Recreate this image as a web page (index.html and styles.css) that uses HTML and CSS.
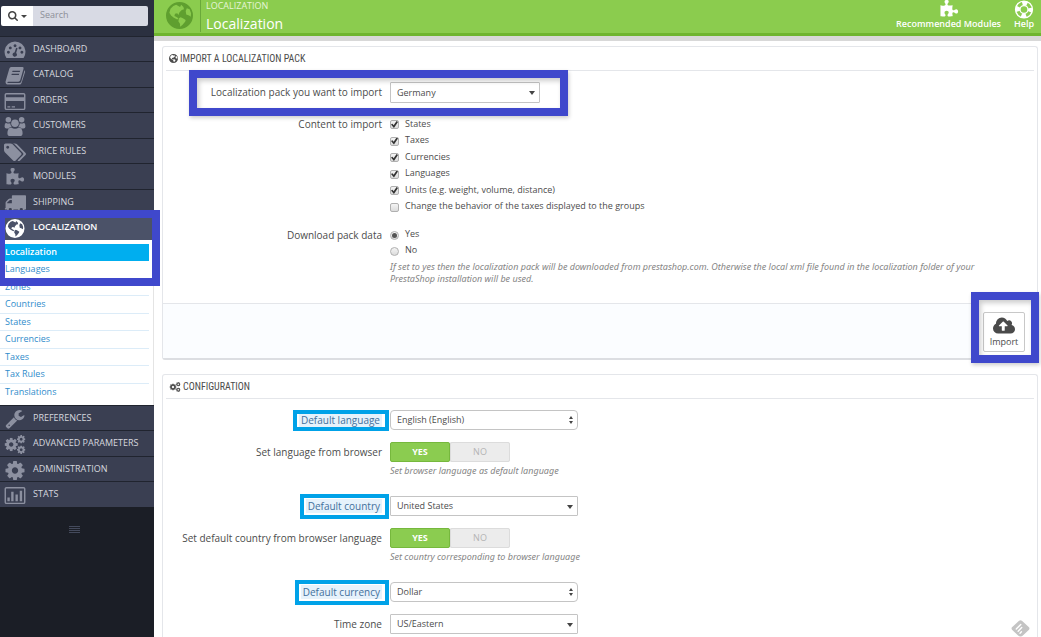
FILE: index.html
```html
<!DOCTYPE html>
<html lang="en">
<head>
<meta charset="utf-8">
<meta name="viewport" content="width=device-width, initial-scale=1">
<title>Localization</title>
<link rel="stylesheet" href="styles.css">
</head>
<body>
<svg class="sprite" aria-hidden="true">
  <symbol id="cog" viewBox="128 128 1536 1536"><path d="M1152 896q0-106-75-181t-181-75-181 75-75 181 75 181 181 75 181-75 75-181zm512-109v222q0 12-8 23t-20 13l-185 28q-19 54-39 91 35 50 107 138 10 12 10 25t-9 23q-27 37-99 108t-94 71q-12 0-26-9l-138-108q-44 23-91 38-16 136-29 186-7 28-36 28h-222q-14 0-24.5-8.5t-11.5-21.5l-28-184q-49-16-90-37l-141 107q-10 9-25 9-14 0-25-11-126-114-165-168-7-10-7-23 0-12 8-23 15-21 51-66.5t54-70.5q-27-50-41-99l-183-27q-13-2-21-12.5t-8-23.5v-222q0-12 8-23t19-13l186-28q14-46 39-92-40-57-107-138-10-12-10-24 0-10 9-23 26-36 98.5-107.5t94.5-71.5q13 0 26 10l138 107q44-23 91-38 16-136 29-186 7-28 36-28h222q14 0 24.5 8.5t11.5 21.5l28 184q49 16 90 37l142-107q9-9 24-9 13 0 25 10 129 119 165 170 7 8 7 22 0 12-8 23-15 21-51 66.5t-54 70.5q26 50 41 98l183 28q13 2 21 12.5t8 23.5z"/></symbol>
  <symbol id="cogs" viewBox="0 0 22 20"><use href="#cog" x="0" y="3" width="14" height="14"/><use href="#cog" x="13" y="0" width="9" height="9"/><use href="#cog" x="13" y="11" width="9" height="9"/></symbol>
  <symbol id="globe" viewBox="0 0 24 24"><path fill-rule="evenodd" d="M12 0a12 12 0 1 1 0 24a12 12 0 0 1 0-24zM6.500 3.500L4 6L3 9.500L4.500 12L7 14L10 15.500L11 14.500L9 13L7.500 12.500L8 10.500L10 10L11 11.500L12 9L14 7L16 6.500L15.500 4.500L13.500 2.500L12.500 4.500L11 3.500L9 2.500zM11.500 14.500L11 17L12.500 19.500L12.500 22L14.500 20.500L17 17.500L17.500 16L15 14.500L13 13.500zM18.500 5.500L17.500 8L18 11L20.500 12L22 13L22.300 10L21 6.500z"/></symbol>
  <symbol id="puzzle" viewBox="0 0 1792 1792"><path d="M1755 1083q0 81-44.500 135t-123.500 54q-41 0-77.500-17.500t-59-38-56.500-38-71-17.500q-110 0-110 124 0 39 16 115t15 115v5q-22 0-33 1-34 3-97.500 11.500t-115.500 13.500-98 5q-61 0-103-26.500t-42-83.500q0-37 17.500-71t38-56.500 38-59 17.500-77.500q0-79-54-123.500t-135-44.500q-84 0-143 45.500t-59 127.500q0 43 15 83t33.500 64.500 33.500 53 15 50.500q0 45-46 89-37 35-117 35-95 0-245-24-9-2-27.500-4t-27.500-4l-13-2q-1 0-3-1-2 0-2-1v-1024q2 1 17.500 3.500t34 5 21.500 3.500q150 24 245 24 80 0 117-35 46-44 46-89 0-22-15-50.500t-33.500-53-33.500-64.500-15-83q0-82 59-127.500t144-45.500q80 0 134 44.500t54 123.500q0 41-17.500 77.500t-38 59-38 56.500-17.500 71q0 57 42 83.500t103 26.500q64 0 180-15t163-17v2q-1 2-3.500 17.500t-5 34-3.500 21.500q-24 150-24 245 0 80 35 117 44 46 89 46 22 0 50.500-15t53-33.500 64.500-33.500 83-15q82 0 127.500 59t45.500 143z"/></symbol>
</svg>

<div class="app">
  <nav class="sidebar" aria-label="Main menu">
    <form class="search">
      <button class="search-scope" type="button" aria-label="Search in">
        <svg class="search-icon" viewBox="64 128 1664 1664"><path d="M1216 832q0-185-131.500-316.500t-316.500-131.500-316.500 131.500-131.500 316.500 131.500 316.500 316.500 131.500 316.500-131.500 131.500-316.500zm512 832q0 52-38 90t-90 38q-54 0-90-38l-343-342q-179 124-399 124-143 0-273.500-55.500t-225-150-150-225-55.500-273.500 55.500-273.500 150-225 225-150 273.500-55.500 273.500 55.500 225 150 150 225 55.500 273.500q0 220-124 399l343 343q37 37 37 90z"/></svg>
        <span class="caret"></span>
      </button>
      <input class="search-input" type="text" placeholder="Search" aria-label="Search">
    </form>

    <ul class="menu">
      <li><a class="menu-link" href="#"><svg class="menu-icon" viewBox="0 0 22 20"><path fill-rule="evenodd" d="M1.800 17.500A11 11 0 1 1 20.200 17.500Q19.900 18 19.300 18H2.700Q2.100 18 1.800 17.500zM4 10.300a1.500 1.500 0 1 0 .1 0zM6 5.800a1.500 1.500 0 1 0 .1 0zM11 3.500a1.500 1.500 0 1 0 .1 0zM16.200 5.800a1.500 1.500 0 1 0 .1 0zM18.200 10.300a1.500 1.500 0 1 0 .1 0zM12.200 7.200L10.500 12a2.300 2.300 0 1 0 1.700 .5L13.700 7.700z"/></svg>DASHBOARD</a></li>
      <li><a class="menu-link" href="#"><svg class="menu-icon" viewBox="0 0 22 20"><path fill-rule="evenodd" d="M7 1H19Q20.500 1.300 20 3L16.500 15Q16 16.500 14.500 16.500H4Q2.800 16.500 3 17.500Q3.300 18 4 18H15.500Q17 18 17.500 16.500L21 4.500Q22 5 21.500 6.500L18 17.500Q17.500 19.500 15.500 19.500H4Q1 19.500 1 16.500L5 3Q5.500 1 7 1zM8.500 5L8 6.200H16L16.500 5zM7.700 8.200L7.200 9.400H15L15.500 8.200z"/></svg>CATALOG</a></li>
      <li><a class="menu-link" href="#"><svg class="menu-icon" viewBox="0 0 22 20"><path fill-rule="evenodd" d="M2 1H20Q22 1 22 3V17Q22 19 20 19H2Q0 19 0 17V3Q0 1 2 1zM1.500 3V5.500H20.500V3Q20.500 2.500 20 2.500H2Q1.500 2.500 1.500 3zM1.500 9.500V17Q1.500 17.500 2 17.500H20Q20.500 17.500 20.500 17V9.500zM3 15H6V16.300H3zM7.500 15H11V16.300H7.500z"/></svg>ORDERS</a></li>
      <li><a class="menu-link" href="#"><svg class="menu-icon" viewBox="0 0 22 20"><circle cx="4" cy="3" r="2.900"/><circle cx="18" cy="3" r="2.900"/><circle cx="11" cy="6.500" r="4"/><path d="M1.500 6Q3.500 7.500 6 6.500Q6 9 7.500 10.500Q5 10.500 4.500 12H2Q0 12 0 10Q0 6.500 1.500 6zM20.500 6Q18.500 7.500 16 6.500Q16 9 14.500 10.500Q17 10.500 17.500 12H20Q22 12 22 10Q22 6.500 20.500 6zM7 11Q11 13.500 15 11Q19 11.500 19 17Q19 20 16 20H6Q3 20 3 17Q3 11.500 7 11z"/></svg>CUSTOMERS</a></li>
      <li><a class="menu-link" href="#"><svg class="menu-icon" viewBox="0 100 1900 1600"><path d="M448 448q0-53-37.500-90.500t-90.500-37.500-90.500 37.500-37.500 90.500 37.500 90.500 90.500 37.500 90.500-37.500 37.500-90.500zm1067 576q0 53-37 90l-491 492q-39 37-91 37-53 0-90-37l-715-716q-38-37-64.500-101t-26.500-117v-416q0-52 38-90t90-38h416q53 0 117 26.500t102 64.500l715 714q37 39 37 91zm384 0q0 53-37 90l-491 492q-39 37-91 37-36 0-59-14t-53-45l470-470q37-37 37-90 0-52-37-91l-715-714q-38-38-102-64.500t-117-26.500h224q53 0 117 26.500t102 64.500l715 714q37 39 37 91z"/></svg>PRICE RULES</a></li>
      <li><a class="menu-link" href="#"><svg class="menu-icon"><use href="#puzzle"/></svg>MODULES</a></li>
      <li><a class="menu-link" href="#"><svg class="menu-icon" viewBox="0 150 1792 1542"><path d="M640 1408q0-52-38-90t-90-38-90 38-38 90 38 90 90 38 90-38 38-90zm-384-512h384v-256h-158q-13 0-22 9l-195 195q-9 9-9 22v30zm1280 512q0-52-38-90t-90-38-90 38-38 90 38 90 90 38 90-38 38-90zm256-1088v1024q0 15-4 26.500t-13.500 18.500-16.500 11.500-23.500 6-22.500 2-25.500 0-22.500-.5q0 106-75 181t-181 75-181-75-75-181h-384q0 106-75 181t-181 75-181-75-75-181h-64q-3 0-22.500.5t-25.500 0-22.500-2-23.500-6-16.500-11.500-13.500-18.500-4-26.500q0-26 19-45t45-19v-320q0-8-.5-35t0-38 2.500-34.500 6.500-37 14-30.500 22.500-30l198-198q19-19 50.500-32t58.500-13h160v-192q0-26 19-45t45-19h1024q26 0 45 19t19 45z"/></svg>SHIPPING</a></li>
      <li class="menu-current">
        <a class="menu-link" href="#" aria-current="true"><svg class="menu-icon"><use href="#globe"/></svg>LOCALIZATION</a>
        <ul class="submenu">
          <li><a class="current" href="#" aria-current="page">Localization</a></li>
          <li><a href="#">Languages</a></li>
          <li><a href="#">Zones</a></li>
          <li><a href="#">Countries</a></li>
          <li><a href="#">States</a></li>
          <li><a href="#">Currencies</a></li>
          <li><a href="#">Taxes</a></li>
          <li><a href="#">Tax Rules</a></li>
          <li><a href="#">Translations</a></li>
        </ul>
        <span class="mark mark-menu"></span>
      </li>
      <li><a class="menu-link" href="#"><svg class="menu-icon" viewBox="64 128 1664 1664"><path d="M448 1472q0-26-19-45t-45-19-45 19-19 45 19 45 45 19 45-19 19-45zm644-420l-682 682q-37 37-90 37-52 0-91-37l-106-108q-38-36-38-90 0-53 38-91l681-681q39 98 114.500 173.500t173.500 114.500zm634-435q0 39-23 106-47 134-164.500 217.500t-258.500 83.500q-185 0-316.500-131.500t-131.500-316.500 131.500-316.500 316.500-131.500q58 0 121.500 16.500t107.500 46.500q16 11 16 28t-16 28l-293 169v224l193 107q5-3 79-48.500t135.500-81 70.500-35.500q15 0 23.500 10t8.500 25z"/></svg>PREFERENCES</a></li>
      <li><a class="menu-link" href="#"><svg class="menu-icon"><use href="#cogs"/></svg>ADVANCED PARAMETERS</a></li>
      <li><a class="menu-link" href="#"><svg class="menu-icon"><use href="#cog"/></svg>ADMINISTRATION</a></li>
      <li><a class="menu-link" href="#"><svg class="menu-icon" viewBox="0 0 22 20"><path fill-rule="evenodd" d="M2 1H20Q22 1 22 3V17Q22 19 20 19H2Q0 19 0 17V3Q0 1 2 1zM1.500 3V17Q1.500 17.500 2 17.500H20Q20.500 17.500 20.500 17V3Q20.500 2.500 20 2.500H2Q1.500 2.500 1.500 3zM3 12H5.500V16H3zM7 6H9.500V16H7zM11.500 9H14V16H11.500zM16 5H18.500V16H16z"/></svg>STATS</a></li>
    </ul>
    <button class="collapse" type="button" aria-label="Collapse menu"><span></span><span></span><span></span><span></span></button>
  </nav>

  <div class="content">
    <header class="page-head">
      <svg class="head-globe"><use href="#globe"/></svg>
      <div class="head-titles">
        <a class="crumb" href="#">LOCALIZATION</a>
        <h1>Localization</h1>
      </div>
      <a class="head-action" href="#"><svg><use href="#puzzle"/></svg>Recommended Modules</a>
      <a class="head-action" href="#"><svg viewBox="0 0 22 22"><circle cx="11" cy="11" r="9.800" fill="none" stroke="currentColor" stroke-width="1.500"/><circle cx="11" cy="11" r="4.600" fill="none" stroke="currentColor" stroke-width="1.500"/><circle cx="11" cy="11" r="7.300" fill="none" stroke="currentColor" stroke-width="5" stroke-dasharray="5.730 5.730" stroke-dashoffset="2.870"/></svg>Help</a>
    </header>

    <main>
      <form class="panel">
        <h2><svg class="h-globe"><use href="#globe"/></svg>IMPORT A LOCALIZATION PACK</h2>
        <div class="fields">
          <div class="row">
            <span class="mark mark-row"></span>
            <label class="label" for="pack">Localization pack you want to import</label>
            <span class="select select-short"><select id="pack"><option>Germany</option></select></span>
          </div>
          <div class="row" role="group" aria-labelledby="content-label">
            <span class="label label-group" id="content-label">Content to import</span>
            <div class="choices">
              <label><input type="checkbox" checked>States</label>
              <label><input type="checkbox" checked>Taxes</label>
              <label><input type="checkbox" checked>Currencies</label>
              <label><input type="checkbox" checked>Languages</label>
              <label><input type="checkbox" checked>Units (e.g. weight, volume, distance)</label>
              <label><input type="checkbox">Change the behavior of the taxes displayed to the groups</label>
            </div>
          </div>
          <div class="row" role="radiogroup" aria-labelledby="download-label">
            <span class="label label-group" id="download-label">Download pack data</span>
            <div>
              <div class="choices choices-radio">
                <label><input type="radio" name="download" checked>Yes</label>
                <label><input type="radio" name="download">No</label>
              </div>
              <p class="help">If set to yes then the localization pack will be downloaded from prestashop.com. Otherwise the local xml file found in the localization folder of your PrestaShop installation will be used.</p>
            </div>
          </div>
        </div>
        <div class="panel-foot">
          <div class="import-wrap">
            <span class="mark mark-import"></span>
            <button class="import" type="button"><svg viewBox="0 128 1920 1408"><path d="M1280 864q0-14-9-23l-352-352q-9-9-23-9t-23 9l-351 351q-10 12-10 24 0 14 9 23t23 9h224v352q0 13 9.500 22.500t22.500 9.500h192q13 0 22.500-9.500t9.500-22.500v-352h224q13 0 22.500-9.500t9.500-22.500zm640 288q0 159-112.500 271.500t-271.500 112.500h-1088q-185 0-316.500-131.500t-131.500-316.500q0-130 70-240t188-165q-2-30-2-43 0-212 150-362t362-150q156 0 285.500 87t188.500 231q71-62 166-62 106 0 181 75t75 181q0 76-41 138 130 31 213.500 135.500t83.500 238.500z"/></svg>Import</button>
          </div>
        </div>
      </form>

      <form class="panel panel-last">
        <h2><svg class="h-cogs"><use href="#cogs"/></svg>CONFIGURATION</h2>
        <div class="fields">
          <div class="row">
            <label class="label" for="lang"><span class="hint hint-slim">Default language</span></label>
            <span class="select select-native"><select id="lang"><option>English (English)</option></select></span>
          </div>
          <div class="row row-help" role="radiogroup" aria-labelledby="sl">
            <span class="label" id="sl">Set language from browser</span>
            <div>
              <div class="switch"><label><input type="radio" name="sl" checked>YES</label><label><input type="radio" name="sl">NO</label></div>
              <p class="help">Set browser language as default language</p>
            </div>
          </div>
          <div class="row">
            <label class="label" for="country"><span class="hint">Default country</span></label>
            <span class="select"><select id="country"><option>United States</option></select></span>
          </div>
          <div class="row row-help" role="radiogroup" aria-labelledby="sc">
            <span class="label" id="sc">Set default country from browser language</span>
            <div>
              <div class="switch"><label><input type="radio" name="sc" checked>YES</label><label><input type="radio" name="sc">NO</label></div>
              <p class="help">Set country corresponding to browser language</p>
            </div>
          </div>
          <div class="row">
            <label class="label" for="currency"><span class="hint">Default currency</span></label>
            <span class="select select-native"><select id="currency"><option>Dollar</option></select></span>
          </div>
          <div class="row">
            <label class="label" for="tz">Time zone</label>
            <span class="select"><select id="tz"><option>US/Eastern</option></select></span>
          </div>
        </div>
      </form>
    </main>
  </div>
</div>
<a class="badge" href="#" aria-label="Feedly"><svg viewBox="0 0 20 18"><path fill="#c4c4c4" d="M8.500 .8Q10 -.4 11.500 .8L19 7.800Q20 9 19 10.200L12.500 16.500Q11.500 17.500 10 17.500Q8.500 17.500 7.500 16.500L1 10.200Q0 9 1 7.800z"/><path fill="none" stroke="#fff" stroke-width="1.500" stroke-linecap="round" d="M5.500 9.500L10.300 4.700M7.500 11.800L11.300 8M9.500 14L11 12.500"/></svg></a>
</body>
</html>
```
FILE: styles.css
```css
:root {
  --mark: #3f48cc;
  --cyan: #00a2e8;
  --line: #e4e6ea;
  --text: #4c4c4c;
}

* { box-sizing: border-box; }

body {
  margin: 0;
  background: #fff;
  color: var(--text);
  font-family: "Open Sans", "Noto Sans", sans-serif;
  font-size: 9px;
  line-height: 16px;
}

ul { margin: 0; padding: 0; list-style: none; }
a { text-decoration: none; }
button, input, select { font: inherit; color: inherit; }
svg { fill: currentColor; flex: none; }
.sprite { position: absolute; width: 0; height: 0; }

.app { display: flex; min-height: 100vh; }

/* Sidebar */
.sidebar { width: 154px; flex: none; background: #1b1e26; }

.search {
  display: flex;
  height: 36px;
  padding: 6px 6px 10px 1px;
  background: #2b3040;
}
.search-scope {
  display: flex;
  align-items: center;
  justify-content: center;
  gap: 3px;
  width: 32px;
  padding: 0;
  border: 0;
  border-radius: 2px 0 0 2px;
  background: #fff;
  color: #444;
}
.search-icon { width: 10px; height: 10px; }
.caret {
  border: 3px solid transparent;
  border-top-color: currentColor;
  border-bottom: 0;
}
.search-input {
  flex: 1;
  min-width: 0;
  padding: 0 7px 2px;
  border: 0;
  border-radius: 0 2px 2px 0;
  background: #d8dae4;
}
.search-input::placeholder { color: #8d8f98; opacity: 1; }

.menu-link {
  display: flex;
  align-items: center;
  gap: 7px;
  height: 25px;
  padding: 0 0 1px 4px;
  border-top: 1px solid #20242f;
  background: #3a3f52;
  color: #d6d8df;
  white-space: nowrap;
  overflow: hidden;
}
.menu > li:nth-child(even) > .menu-link { height: 26px; }
.menu-icon { width: 22px; height: 19px; margin-top: 3px; color: #8c90a0; }
.menu-current { position: relative; }
.menu-current > .menu-link { background: #4b5268; color: #fff; font-weight: 600; }
.menu-current .menu-icon { color: #fff; }

.submenu { padding: 4px 4px 4px 0; background: #fff; border-right: 1px solid #e4e4e4; }
.submenu li { height: 17px; border-bottom: 1px solid #dcecf8; }
.submenu li:nth-child(even) { height: 18px; }
.submenu li:last-child { border-bottom: 0; }
.submenu li:first-child { border-bottom-color: #00aeef; }
.submenu a { display: block; padding-left: 5px; line-height: 16px; color: #2f8ccb; }
.submenu .current { background: #00aeef; color: #fff; font-weight: 600; }

.collapse {
  display: grid;
  gap: 1px;
  width: 11px;
  margin: 19px auto 0 69px;
  padding: 0;
  border: 0;
  background: none;
}
.collapse span { height: 1px; background: #444a5c; }

/* Highlight frames laid over the interface */
.mark {
  position: absolute;
  z-index: 2;
  border: 8px solid var(--mark);
  pointer-events: none;
}
.mark-menu { top: -4px; left: 0; width: 160px; height: 76px; border-left-width: 5px; }
.mark-row, .mark-import { box-shadow: 1px 2px 4px #0003, inset 2px 3px 5px #0003; }
.mark-row { top: -12px; left: 26px; width: 379px; height: 46px; }
.mark-import { top: -20px; right: -14px; width: 68px; height: 71px; }

/* Page header */
.content { flex: 1; min-width: 0; display: flex; flex-direction: column; }
.page-head {
  display: flex;
  align-items: flex-start;
  gap: 12px;
  height: 41px;
  padding: 0 6px 0 12px;
  border-bottom: 5px solid #d8d8d8;
  background: linear-gradient(#8bcc4e 33px, #6fb52f 33px);
  color: #fff;
}
.head-globe { width: 27px; height: 27px; margin-top: 2px; margin-right: -5px; color: #5f9f2f; }
.head-titles {
  display: flex;
  flex-direction: column;
  flex: 1;
  height: 32px;
  padding-left: 5px;
  border-left: 1px solid #6aa93a;
}
.crumb { color: #e6f5d8; line-height: 12px; }
h1 { margin: 0; font-size: 14px; font-weight: 400; line-height: 23px; }
.head-action {
  display: flex;
  flex-direction: column;
  align-items: center;
  color: #fff;
  font-weight: 600;
  line-height: 10px;
}
.head-action svg { width: 22px; height: 19px; }

/* Panels */
main { flex: 1; display: flex; flex-direction: column; gap: 14px; padding: 5px 3px 0 8px; }
.panel { border: 1px solid var(--line); border-bottom: 2px solid #dcdee2; border-radius: 3px; }
.panel-last { flex: 1; border-bottom: 0; border-radius: 3px 3px 0 0; }
h2 {
  display: flex;
  align-items: center;
  gap: 2px;
  height: 24px;
  margin: 0 3px;
  padding-left: 3px;
  border-bottom: 1px solid var(--line);
  font-family: "Ubuntu Condensed", "Roboto Condensed", "Liberation Sans Narrow", "Open Sans", sans-serif;
  font-size: 10px;
  font-weight: 400;
}
.h-globe { width: 9px; height: 9px; }
.h-cogs { width: 12px; height: 10px; }

.fields { display: grid; gap: 12px; padding: 11px 0 18px; }
.row {
  position: relative;
  display: grid;
  grid-template-columns: minmax(219px, 25%) 1fr;
  column-gap: 8px;
  align-items: start;
}
.row-help { margin-bottom: 7px; }
.label { font-size: 10px; line-height: 20px; text-align: right; white-space: nowrap; }
.label-group { line-height: 18px; }

.select { position: relative; width: 188px; }
.select-short { width: 150px; }
.select select {
  appearance: none;
  display: block;
  width: 100%;
  height: 20px;
  padding: 0 20px 0 6px;
  border: 1px solid #c4c4c4;
  border-radius: 1px;
  background: #fff;
}
.select-short select { height: 21px; }
.select::after {
  content: "";
  position: absolute;
  top: 9px;
  right: 5px;
  border: 3px solid transparent;
  border-top: 4px solid #444;
  border-bottom: 0;
  pointer-events: none;
}
.select-native select { border-radius: 4px; }
.select-native::after { top: 11px; border-width: 3px 2px 0; }
.select-native::before {
  content: "";
  position: absolute;
  top: 6px;
  right: 5px;
  border: 2px solid transparent;
  border-top: 0;
  border-bottom: 3px solid #444;
  pointer-events: none;
}

.choices label { display: flex; align-items: center; height: 17px; }
.choices label:nth-child(even), .choices-radio label { height: 16px; }
.choices input {
  appearance: none;
  display: grid;
  place-items: center;
  width: 9px;
  height: 9px;
  margin: 2px 6px 0 0;
  border: 1px solid #b0b0b0;
  border-radius: 2px;
  background: linear-gradient(#f4f4f4, #dcdcdc);
}
.choices input[type="radio"] { border-radius: 50%; }
.choices input[type="checkbox"]:checked::after {
  content: "";
  width: 7px;
  height: 7px;
  background: #333;
  clip-path: polygon(0 50%, 20% 38%, 38% 62%, 80% 0, 100% 14%, 42% 100%);
}
.choices input[type="radio"]:checked::after {
  content: "";
  width: 5px;
  height: 5px;
  border-radius: 50%;
  background: #555;
}
.help {
  margin: 3px 0 0;
  padding-right: 24px;
  color: #858585;
  font-family: "Noto Sans", "Open Sans", sans-serif;
  font-style: italic;
  line-height: 12px;
}

.panel-foot {
  display: flex;
  justify-content: flex-end;
  padding: 8px 12px 6px;
  border-top: 1px solid var(--line);
  background: #fbfdff;
}
.import-wrap { position: relative; }
.import-wrap::before {
  content: "";
  position: absolute;
  inset: -12px -6px -4px -4px;
  background: #fff;
}
.import {
  position: relative;
  display: flex;
  flex-direction: column;
  align-items: center;
  width: 42px;
  padding: 4px 0 1px;
  border: 1px solid #c8c8c8;
  border-radius: 2px;
  background: #fff;
}
.import svg { width: 22px; height: 17px; color: #4a4a4a; }

.switch {
  display: flex;
  width: 120px;
  height: 20px;
  border-radius: 2px;
  background: #ececec;
  color: #b4b4b4;
  line-height: 18px;
}
.switch label { flex: 1; border: 1px solid #dcdcdc; border-radius: 2px; text-align: center; }
.switch label:has(:checked) { border-color: #76b83d; background: #8bcc50; color: #fff; font-weight: 700; }
.switch input { position: absolute; opacity: 0; width: 1px; height: 1px; margin: 0; }

.hint {
  position: relative;
  display: inline-block;
  padding: 0 2px;
  background: #e6f2fb;
  color: #43709c;
  line-height: 14px;
}
.hint::after {
  content: "";
  position: absolute;
  inset: -5px -7px -6px -6px;
  border: 4px solid var(--cyan);
}
.hint-slim::after { inset: -3px -7px -4px -6px; }

.badge { position: fixed; right: 11px; bottom: 0; display: flex; }
.badge svg { width: 19px; height: 17px; }
```
